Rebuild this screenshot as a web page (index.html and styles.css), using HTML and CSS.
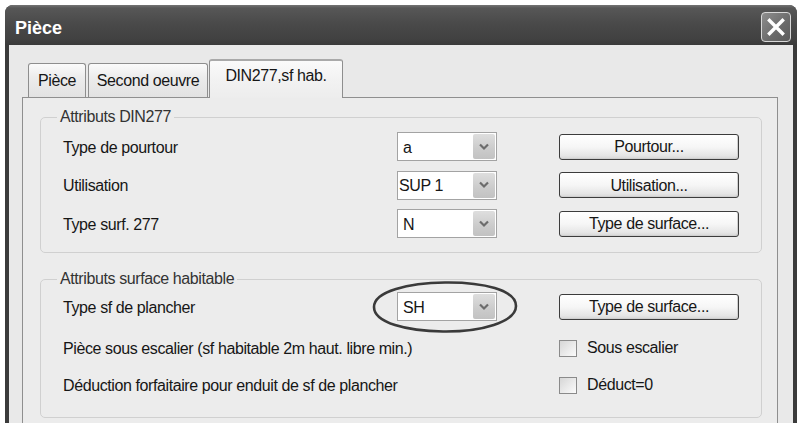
FILE: index.html
```html
<!DOCTYPE html>
<html lang="fr">
<head>
<meta charset="utf-8">
<title>Pièce</title>
<link rel="stylesheet" href="styles.css">
</head>
<body>
<div class="window">
  <div class="titlebar">
    <span class="title">Pièce</span>
    <div class="close">
      <svg width="28" height="28" viewBox="0 0 28 28"><path d="M7.5 7.5 L20.5 20.5 M20.5 7.5 L7.5 20.5" stroke="#fff" stroke-width="3.4" stroke-linecap="square"/></svg>
    </div>
  </div>
  <div class="client">
    <div class="tabs">
      <div class="tab t1">Pièce</div>
      <div class="tab t2">Second oeuvre</div>
      <div class="tab t3 active">DIN277,sf hab.</div>
    </div>
    <div class="panel">
      <fieldset class="group g1">
        <legend>Attributs DIN277</legend>
        <div class="rows r1">
          <div class="row">
            <div class="label">Type de pourtour</div>
            <div class="combo"><span class="val">a</span><span class="drop"><svg width="12" height="8" viewBox="0 0 12 8"><path d="M2 1.5 L6 5.5 L10 1.5" fill="none" stroke="#6c6c6c" stroke-width="2.2"/></svg></span></div>
            <div></div>
            <div class="btn">Pourtour...</div>
          </div>
          <div class="row">
            <div class="label">Utilisation</div>
            <div class="combo tight"><span class="val">SUP 1</span><span class="drop"><svg width="12" height="8" viewBox="0 0 12 8"><path d="M2 1.5 L6 5.5 L10 1.5" fill="none" stroke="#6c6c6c" stroke-width="2.2"/></svg></span></div>
            <div></div>
            <div class="btn">Utilisation...</div>
          </div>
          <div class="row">
            <div class="label">Type surf. 277</div>
            <div class="combo"><span class="val">N</span><span class="drop"><svg width="12" height="8" viewBox="0 0 12 8"><path d="M2 1.5 L6 5.5 L10 1.5" fill="none" stroke="#6c6c6c" stroke-width="2.2"/></svg></span></div>
            <div></div>
            <div class="btn">Type de surface...</div>
          </div>
        </div>
      </fieldset>
      <fieldset class="group g2">
        <legend>Attributs surface habitable</legend>
        <div class="rows r2">
          <div class="row">
            <div class="label">Type sf de plancher</div>
            <div class="combo"><span class="val">SH</span><span class="drop"><svg width="12" height="8" viewBox="0 0 12 8"><path d="M2 1.5 L6 5.5 L10 1.5" fill="none" stroke="#6c6c6c" stroke-width="2.2"/></svg></span>
              <svg class="circle" width="148" height="56" viewBox="0 0 148 56"><path d="M3 28 C3 12 38 4 74 3.5 C112 3 145 11 145 27 C145 43 110 53 72 52.5 C36 52 3 44 3 28 Z" fill="none" stroke="#3a3a3a" stroke-width="2.6"/></svg>
            </div>
            <div></div>
            <div class="btn">Type de surface...</div>
          </div>
          <div class="row check">
            <div class="label">Pièce sous escalier (sf habitable 2m haut. libre min.)</div>
            <div class="cb"><span class="box"></span><span>Sous escalier</span></div>
          </div>
          <div class="row check">
            <div class="label">Déduction forfaitaire pour enduit de sf de plancher</div>
            <div class="cb"><span class="box"></span><span>Déduct=0</span></div>
          </div>
        </div>
      </fieldset>
    </div>
  </div>
</div>
</body>
</html>
```
FILE: styles.css
```css
html, body {
  margin: 0;
  padding: 0;
  background: #ffffff;
}
body {
  font-family: "Liberation Sans", Arial, sans-serif;
  font-size: 16px;
  letter-spacing: -0.4px;
  color: #161616;
}
.window {
  margin: 5px 0 0 5px;
  width: 792px;
  height: 418px;
  background: #3b3b3b;
  border-radius: 8px 8px 0 0;
  overflow: hidden;
  display: flex;
  flex-direction: column;
}
.titlebar {
  flex: none;
  height: 40px;
  display: flex;
  align-items: center;
  padding: 0 6px 0 10px;
  background: linear-gradient(#747474 0, #575757 3px, #4a4a4a 45%, #414141 85%, #3a3a3a 100%);
  box-sizing: border-box;
}
.title {
  color: #ffffff;
  font-weight: bold;
  font-size: 18px;
  letter-spacing: 0;
  margin-top: 7px;
}
.close {
  margin-left: auto;
  margin-top: 4px;
  width: 30px;
  height: 30px;
  box-sizing: border-box;
  border: 1px solid #d8d8d8;
  border-radius: 4px;
  background: linear-gradient(135deg, #8e8e8e, #6a6a6a 60%, #5c5c5c);
  display: flex;
  align-items: center;
  justify-content: center;
}
.client {
  flex: 1;
  margin: 0 4px;
  background: #e9e9e9;
  padding: 14px 15px 0 13px;
  display: flex;
  flex-direction: column;
  min-height: 0;
}
.tabs {
  height: 39px;
  display: flex;
  align-items: flex-end;
  padding-left: 6px;
  margin-bottom: -1px;
  position: relative;
  z-index: 1;
}
.tab {
  box-sizing: border-box;
  height: 34px;
  margin-bottom: 1px;
  border: 1px solid #8e8e8e;
  border-bottom: none;
  border-radius: 3px 3px 0 0;
  background: linear-gradient(#fbfbfb, #ececec 40%, #e2e2e2);
  text-align: center;
  line-height: 18px;
  padding-top: 8px;
}
.t1 { width: 58px; }
.t2 { width: 120px; margin-left: 2px; }
.t3 { width: 134px; margin-left: 1px; }
.tab.active {
  height: 39px;
  margin-bottom: 0;
  padding-top: 6px;
  background: linear-gradient(#fafafa, #f2f2f2 50%, #ededed);
  border-top: 2px solid #a9a9a9;
}
.panel {
  flex: 1;
  border: 1px solid #8f8f8f;
  border-bottom: none;
  background: #ececec;
  padding: 11px 15px 0 17px;
}
.group {
  margin: 0;
  padding: 0;
  border: 1px solid #d0d0d0;
  border-radius: 5px;
  min-width: 0;
}
.g2 {
  margin-top: 18px;
}
legend {
  margin-left: 16px;
  padding: 0 3px;
  line-height: 16px;
  color: #333333;
}
.rows {
  padding: 7px 22px 14px 22px;
}
.r2 {
  padding-top: 5px;
  padding-bottom: 22px;
}
.row {
  display: grid;
  grid-template-columns: 334px 100px 62px 180px;
  align-items: center;
  height: 29px;
}
.r1 .row + .row {
  margin-top: 9.5px;
}
.row.check {
  grid-template-columns: 496px 180px;
  height: 20px;
  margin-top: 17px;
}
.label {
  white-space: nowrap;
  padding-top: 2px;
}
.combo {
  position: relative;
  box-sizing: border-box;
  height: 29px;
  border: 1px solid #a3a3a3;
  background: #ffffff;
  display: flex;
  align-items: center;
  padding: 0 1px 0 5px;
}
.combo.tight {
  padding-left: 1px;
}
.val {
  padding-top: 2px;
}
.drop {
  margin-left: auto;
  width: 22px;
  height: 25px;
  border-radius: 2px;
  background: linear-gradient(#dedede, #cbcbcb 60%, #c2c2c2);
  display: flex;
  align-items: center;
  justify-content: center;
}
.circle {
  position: absolute;
  left: -27px;
  top: -14px;
  overflow: visible;
  pointer-events: none;
}
.btn {
  box-sizing: border-box;
  height: 26px;
  border: 1px solid #3c3c3c;
  border-radius: 3px;
  background: linear-gradient(#ffffff, #f6f6f6 50%, #e6e6e6 85%, #d6d6d6);
  box-shadow: inset -1px -1px 0 #cfcfcf;
  display: flex;
  align-items: center;
  justify-content: center;
  padding-top: 1px;
}
.cb {
  display: flex;
  align-items: center;
  gap: 10px;
}
.box {
  box-sizing: border-box;
  width: 18px;
  height: 17px;
  border: 1px solid #8a8a8a;
  background: linear-gradient(135deg, #d6d6d6, #f0f0f0 70%, #fbfbfb);
}
```
